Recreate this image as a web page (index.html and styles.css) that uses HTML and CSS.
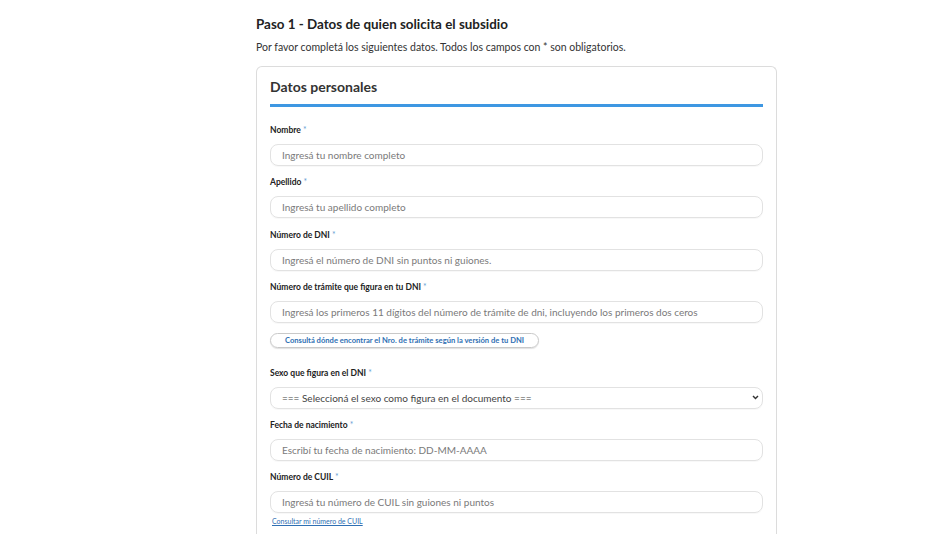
FILE: index.html
```html
<!DOCTYPE html>
<html lang="es">
<head>
<meta charset="utf-8">
<title>Paso 1 - Datos de quien solicita el subsidio</title>
<link rel="stylesheet" href="styles.css">
</head>
<body>
<main class="page">
  <h1 class="step-title">Paso 1 - Datos de quien solicita el subsidio</h1>
  <p class="step-intro">Por favor completá los siguientes datos. Todos los campos con * son obligatorios.</p>
  <section class="card">
    <h2 class="card-title">Datos personales</h2>
    <div class="field">
      <label class="label">Nombre <span class="req">*</span></label>
      <div class="input">Ingresá tu nombre completo</div>
    </div>
    <div class="field">
      <label class="label">Apellido <span class="req">*</span></label>
      <div class="input">Ingresá tu apellido completo</div>
    </div>
    <div class="field">
      <label class="label">Número de DNI <span class="req">*</span></label>
      <div class="input">Ingresá el número de DNI sin puntos ni guiones.</div>
    </div>
    <div class="field">
      <label class="label">Número de trámite que figura en tu DNI <span class="req">*</span></label>
      <div class="input">Ingresá los primeros 11 dígitos del número de trámite de dni, incluyendo los primeros dos ceros</div>
      <div class="pill-row"><span class="pill">Consultá dónde encontrar el Nro. de trámite según la versión de tu DNI</span></div>
    </div>
    <div class="field field-gap">
      <label class="label">Sexo que figura en el DNI <span class="req">*</span></label>
      <div class="input select">
        <span class="select-text">=== Seleccioná el sexo como figura en el documento ===</span>
        <svg class="chev" width="7" height="5" viewBox="0 0 7 5"><path d="M1 1 L3.5 3.6 L6 1" fill="none" stroke="#333" stroke-width="1.4"/></svg>
      </div>
    </div>
    <div class="field">
      <label class="label">Fecha de nacimiento <span class="req">*</span></label>
      <div class="input">Escribí tu fecha de nacimiento: DD-MM-AAAA</div>
    </div>
    <div class="field">
      <label class="label">Número de CUIL <span class="req">*</span></label>
      <div class="input">Ingresá tu número de CUIL sin guiones ni puntos</div>
      <a class="small-link" href="#">Consultar mi número de CUIL</a>
    </div>
  </section>
</main>
</body>
</html>
```
FILE: styles.css
```css
* { box-sizing: border-box; }
html, body { margin: 0; padding: 0; background: #fff; }
body {
  font-family: "Lato", "Open Sans", sans-serif;
  color: #333;
  overflow: hidden;
  height: 534px;
}
.page {
  width: 521px;
  margin-left: 256px;
  padding-top: 15px;
}
.step-title {
  margin: 0;
  font-size: 13.4px;
  line-height: 18px;
  font-weight: 700;
  color: #222;
}
.step-intro {
  margin: 7px 0 0;
  font-size: 10.5px;
  line-height: 14px;
  color: #333;
}
.card {
  margin-top: 12px;
  border: 1px solid #dcdcdc;
  border-bottom: none;
  border-radius: 6px 6px 0 0;
  padding: 10px 13px 0 13px;
  height: 600px;
}
.card-title {
  margin: 0;
  font-size: 14px;
  line-height: 20px;
  font-weight: 700;
  color: #333;
  padding-bottom: 7px;
  border-bottom: 3px solid #3e97e2;
  margin-bottom: 17px;
}
.field { margin-bottom: 10.3px; }
.field-gap { margin-top: 19px; }
.label {
  display: block;
  font-size: 8.5px;
  line-height: 12px;
  font-weight: 700;
  color: #222;
  margin-bottom: 8px;
}
.req { color: #6b9fd4; font-weight: 400; }
.input {
  height: 22px;
  border: 1px solid #e2e2e2;
  border-radius: 8px;
  padding: 0 11px;
  display: flex;
  align-items: center;
  font-size: 10px;
  color: #7a7a7a;
  white-space: nowrap;
  overflow: hidden;
  box-shadow: 0 1px 1px rgba(0,0,0,0.03);
}
.select {
  justify-content: space-between;
  color: #444;
  padding-right: 3px;
}
.chev { flex: none; }
.pill-row { margin-top: 10px; display: flex; }
.pill {
  display: flex;
  align-items: center;
  height: 15px;
  padding: 0 14px;
  border: 1px solid #c9c9c9;
  border-radius: 8px;
  font-size: 7.6px;
  font-weight: 700;
  color: #2f6fb3;
  box-shadow: 0 1px 1px rgba(0,0,0,0.12);
  white-space: nowrap;
}
.small-link {
  display: block;
  width: max-content;
  margin: 3px 0 0 2px;
  font-size: 7px;
  line-height: 10px;
  color: #2f6fb3;
  text-decoration: underline;
}
```
